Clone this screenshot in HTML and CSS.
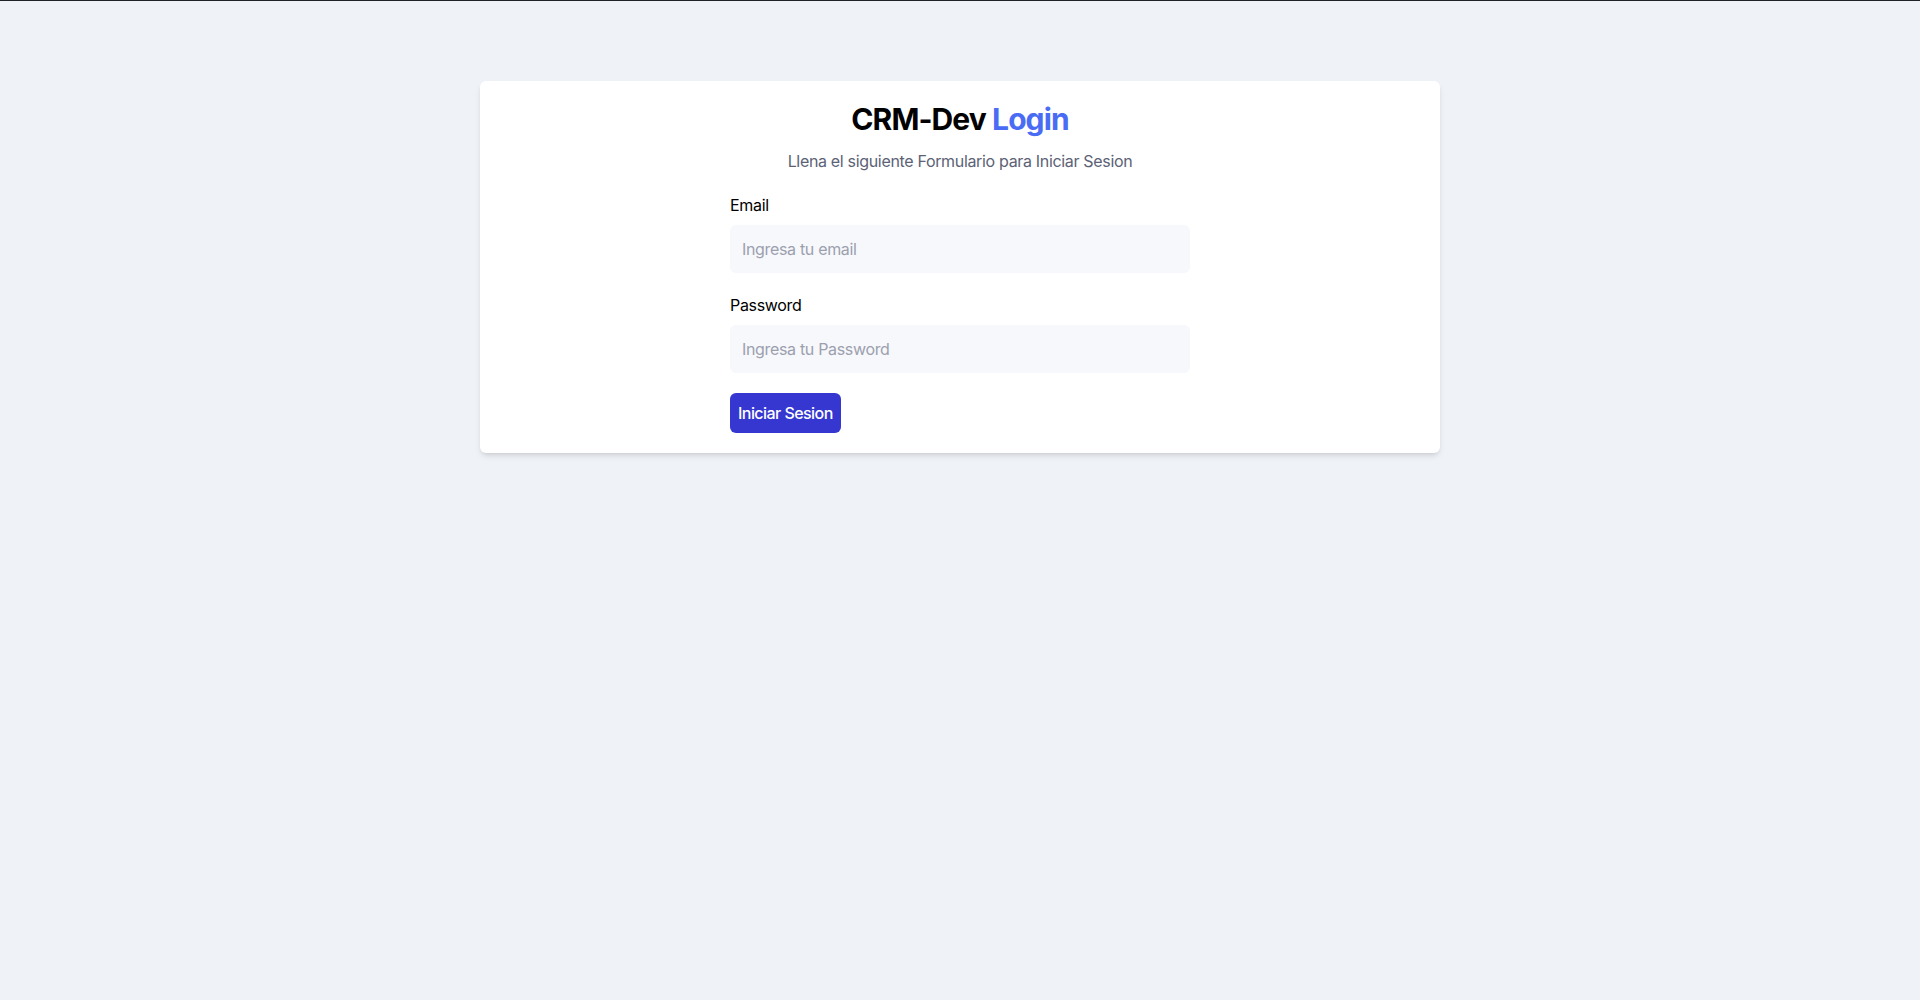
FILE: index.html
```html
<!DOCTYPE html>
<html lang="es">
<head>
<meta charset="utf-8">
<title>CRM-Dev Login</title>
<link rel="stylesheet" href="styles.css">
</head>
<body>
<div class="page">
  <main class="card">
    <h1 class="title">CRM-Dev <span class="accent">Login</span></h1>
    <p class="subtitle">Llena el siguiente Formulario para Iniciar Sesion</p>
    <form class="form">
      <div class="field">
        <label class="label" for="email">Email</label>
        <input class="input" id="email" type="email" placeholder="Ingresa tu email">
      </div>
      <div class="field">
        <label class="label" for="password">Password</label>
        <input class="input" id="password" type="password" placeholder="Ingresa tu Password">
      </div>
      <button class="btn" type="button">Iniciar Sesion</button>
    </form>
  </main>
</div>
</body>
</html>
```
FILE: styles.css
```css
* { box-sizing: border-box; }
html, body { margin: 0; padding: 0; }
body {
  font-family: Inter, "Noto Sans", "Liberation Sans", sans-serif;
  background: #eff2f7;
  color: #000;
  min-height: 1000px;
  letter-spacing: -0.33px;
}
.page {
  border-top: 1px solid #1f2328;
  min-height: 1000px;
  padding-top: 80px;
  display: flex;
  justify-content: center;
  align-items: flex-start;
}
.card {
  width: 960px;
  background: #fff;
  border-radius: 6px;
  box-shadow: 0 4px 6px -1px rgba(0,0,0,0.1), 0 2px 4px -2px rgba(0,0,0,0.1);
  padding: 20px 0 20px;
  display: flex;
  flex-direction: column;
  align-items: center;
}
.title {
  margin: 0;
  font-size: 30px;
  line-height: 36px;
  font-weight: 700;
  letter-spacing: -0.9px;
}
.accent { color: #4a6cf5; }
.subtitle {
  margin: 12px 0 0;
  font-size: 16px;
  line-height: 24px;
  color: #5b6275;
}
.form {
  width: 460px;
  margin-top: 20px;
  display: flex;
  flex-direction: column;
  align-items: flex-start;
}
.field {
  width: 100%;
  margin-bottom: 20px;
  display: flex;
  flex-direction: column;
  gap: 8px;
}
.label {
  font-size: 16px;
  line-height: 24px;
  color: #000;
}
.input {
  width: 100%;
  height: 48px;
  border: none;
  border-radius: 6px;
  background: #f7f8fc;
  padding: 12px;
  font-family: inherit;
  font-size: 16px;
  line-height: 24px;
  letter-spacing: -0.33px;
  color: #111;
  outline: none;
}
.input::placeholder { color: #9ca0ae; }
.btn {
  height: 40px;
  padding: 8px;
  border: none;
  border-radius: 6px;
  background: #3537d0;
  color: #fff;
  font-family: inherit;
  font-size: 16px;
  line-height: 24px;
  font-weight: 500;
  letter-spacing: -0.55px;
  cursor: pointer;
}
```
